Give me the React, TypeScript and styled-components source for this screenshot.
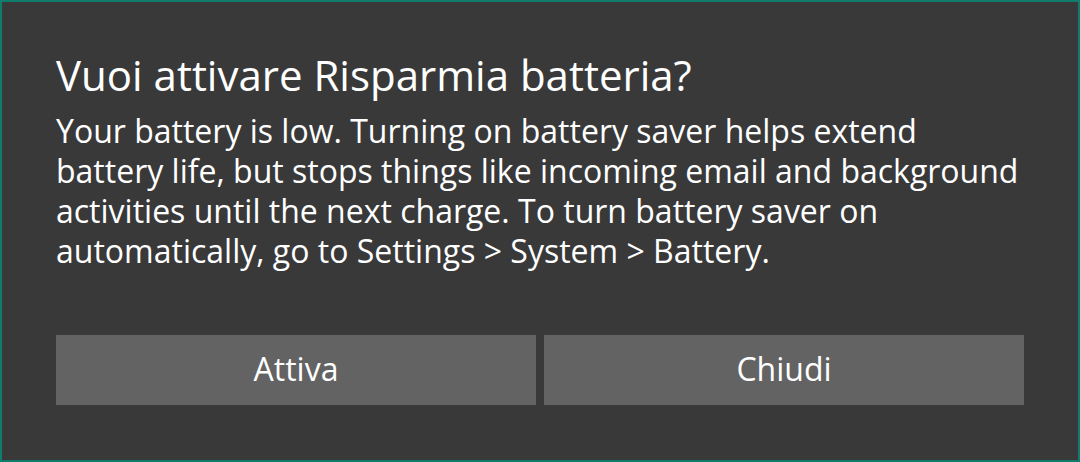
import React from 'react';
import styled, { createGlobalStyle } from 'styled-components';

const GlobalStyle = createGlobalStyle`
    html, body {
        margin: 0;
        padding: 0;
        background: #393939;
    }
`;

const Dialog = styled.div`
    box-sizing: border-box;
    width: 1080px;
    height: 462px;
    border: 2px solid #0f7d6c;
    background: #393939;
    color: #ffffff;
    font-family: "Open Sans", "Noto Sans", sans-serif;
    padding: 47px 54px 0;
    display: flex;
    flex-direction: column;
`;

const Title = styled.h1`
    margin: 0;
    font-size: 42px;
    font-weight: 400;
    line-height: 52px;
    white-space: nowrap;
`;

const Body = styled.p`
    margin: 10px 0 0;
    font-size: 32px;
    line-height: 40px;
`;

const Line = styled.span`
    display: block;
    white-space: nowrap;
`;

const Actions = styled.div`
    display: grid;
    grid-template-columns: 1fr 1fr;
    gap: 8px;
    margin-top: 64px;
`;

const Button = styled.button`
    height: 70px;
    border: none;
    background: #636363;
    color: #ffffff;
    font-family: inherit;
    font-size: 32px;
    padding: 0 0 3px;
    cursor: pointer;
`;

const lines = [
    'Your battery is low. Turning on battery saver helps extend',
    'battery life, but stops things like incoming email and background',
    'activities until the next charge. To turn battery saver on',
    'automatically, go to Settings > System > Battery.',
];

export default function App() {
    return (
        <>
            <GlobalStyle />
            <Dialog>
                <Title>Vuoi attivare Risparmia batteria?</Title>
                <Body>
                    {lines.map(line => <Line key={line}>{line}</Line>)}
                </Body>
                <Actions>
                    <Button>Attiva</Button>
                    <Button>Chiudi</Button>
                </Actions>
            </Dialog>
        </>
    );
}
